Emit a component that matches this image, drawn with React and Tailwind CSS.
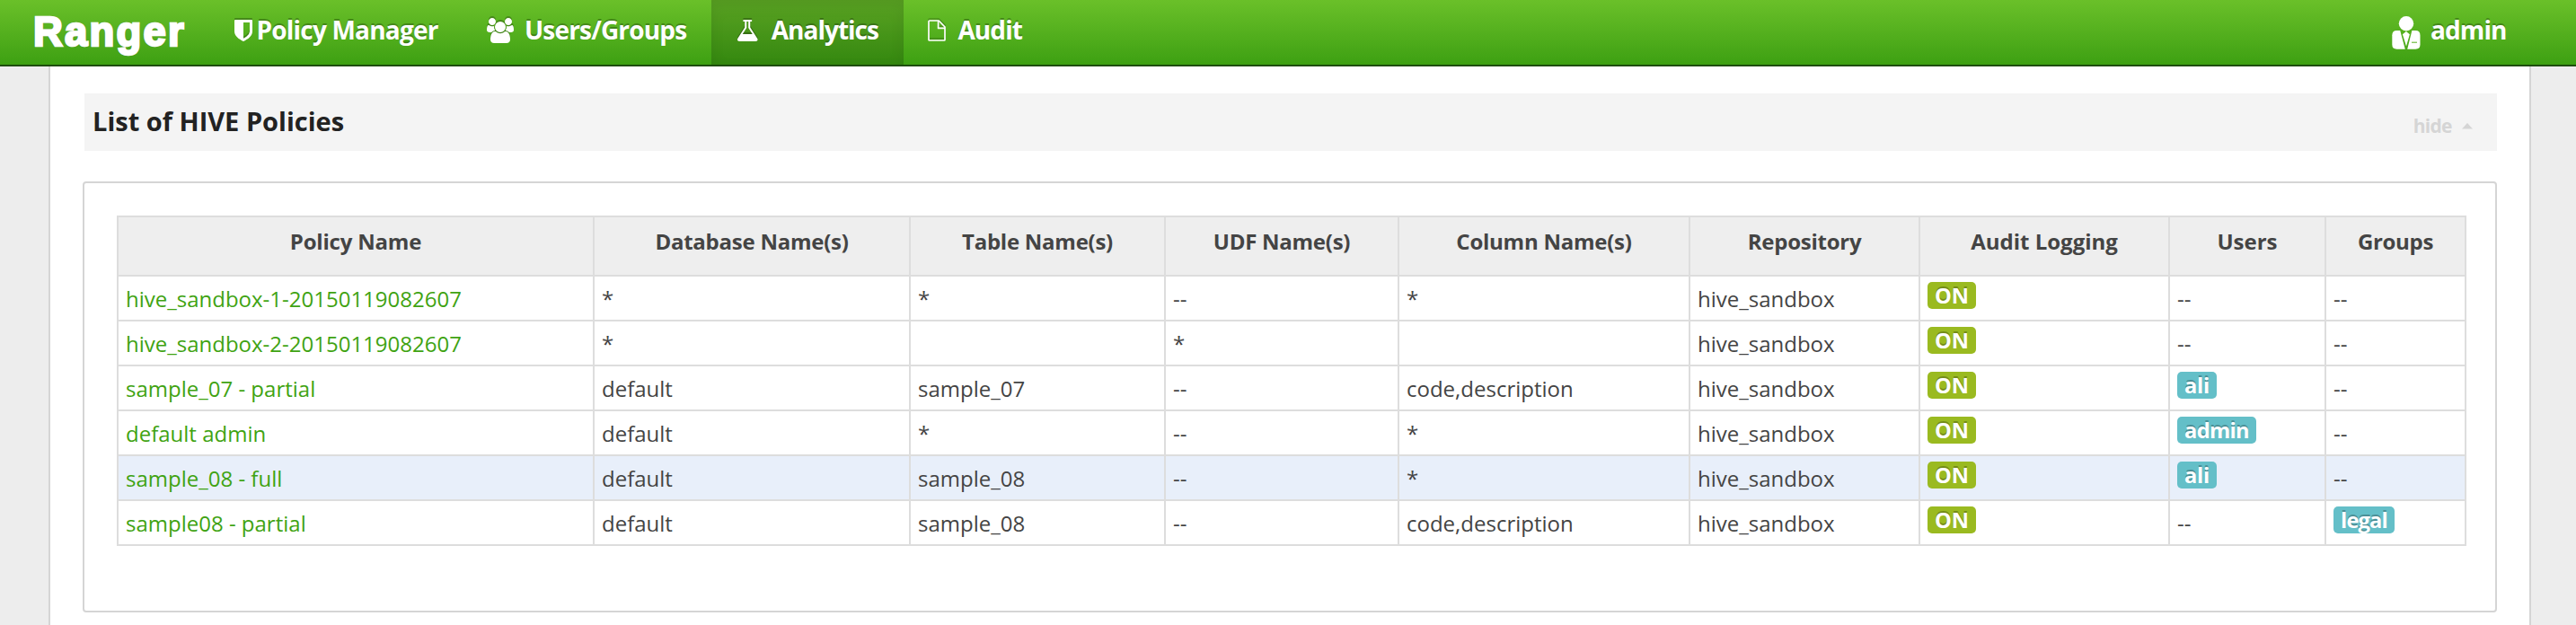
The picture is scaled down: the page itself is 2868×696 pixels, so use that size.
const columns = [
  { key: 'name', label: 'Policy Name', width: 'w-[530px] tracking-[-0.2px]' },
  { key: 'database', label: 'Database Name(s)', width: 'w-[352px] tracking-[-0.25px]' },
  { key: 'table', label: 'Table Name(s)', width: 'w-[284px] tracking-[-0.25px]' },
  { key: 'udf', label: 'UDF Name(s)', width: 'w-[260px] tracking-[-0.25px]' },
  { key: 'column', label: 'Column Name(s)', width: 'w-[324px] tracking-[-0.25px]' },
  { key: 'repository', label: 'Repository', width: 'w-[256px] tracking-[-0.25px]' },
  { key: 'audit', label: 'Audit Logging', width: 'w-[278px]' },
  { key: 'users', label: 'Users', width: 'w-[174px]' },
  { key: 'groups', label: 'Groups', width: 'w-[156px] tracking-[-0.3px]' },
];

const policies = [
  { name: 'hive_sandbox-1-20150119082607', database: '*', table: '*', udf: '--', column: '*', users: '--', groups: '--' },
  { name: 'hive_sandbox-2-20150119082607', database: '*', table: '', udf: '*', column: '', users: '--', groups: '--' },
  { name: 'sample_07 - partial', database: 'default', table: 'sample_07', udf: '--', column: 'code,description', users: 'ali', groups: '--' },
  { name: 'default admin', database: 'default', table: '*', udf: '--', column: '*', users: 'admin', groups: '--' },
  { name: 'sample_08 - full', database: 'default', table: 'sample_08', udf: '--', column: '*', users: 'ali', groups: '--', hovered: true },
  { name: 'sample08 - partial', database: 'default', table: 'sample_08', udf: '--', column: 'code,description', users: '--', groups: 'legal' },
];

const labelTracking = {
  ali: 'tracking-[-0.27px]',
  admin: 'tracking-[-0.66px]',
  legal: 'tracking-[-0.82px]',
  ON: '',
};

const iconShadow = 'fill-white [filter:drop-shadow(0_-2px_0_rgba(0,0,0,0.25))]';

function ShieldIcon() {
  return (
    <svg viewBox="0 0 1280 1536" className={`mt-[22px] h-6 w-5 shrink-0 ${iconShadow}`}>
      <path d="M1088 832V192H640v1137q119-63 213-137 235-184 235-360zM1280 64v768q0 86-33.5 170.5t-83 150-118 127.5-126.5 103-121 77.5-89.5 49.5-42.5 20q-12 6-26 6t-26-6q-16-7-42.5-20t-89.5-49.5-121-77.5-126.5-103-118-127.5-83-150T0 832V64q0-26 19-45T64 0h1152q26 0 45 19t19 45z" />
    </svg>
  );
}

function GroupIcon() {
  return (
    <svg viewBox="0 0 1920 1792" className={`mt-5 h-7 w-[30px] shrink-0 ${iconShadow}`}>
      <path d="M593 896q-162 5-265 128H194q-82 0-138-40.5T0 865q0-353 124-353 6 0 43.5 21t97.5 42.5T384 597q67 0 133-23-5 37-5 66 0 139 81 256zM1664 1533q0 120-73 189.5t-194 69.5H523q-121 0-194-69.5T256 1533q0-53 3.5-103.5t14-109T300 1212t43-97.5 62-81 85.5-53.5T602 960q10 0 43 21.5t73 48 107 48 135 21.5 135-21.5 107-48 73-48 43-21.5q61 0 111.5 20t85.5 53.5 62 81 43 97.5 26.5 108.5 14 109 3.5 103.5zM640 256q0 106-75 181t-181 75-181-75-75-181 75-181T384 0t181 75 75 181zM1344 640q0 159-112.5 271.5T960 1024 688.5 911.5 576 640t112.5-271.5T960 256t271.5 112.5T1344 640zM1920 865q0 78-56 118.5t-138 40.5h-134q-103-123-265-128 81-117 81-256 0-29-5-66 66 23 133 23 59 0 119-21.5t97.5-42.5 43.5-21q124 0 124 353zM1792 256q0 106-75 181t-181 75-181-75-75-181 75-181T1536 0t181 75 75 181z" />
    </svg>
  );
}

function FlaskIcon() {
  return (
    <svg viewBox="110 128 1444 1536" className={`mt-[22px] h-6 w-[22.5px] shrink-0 ${iconShadow}`}>
      <path d="M1520 1448q56 89 21.5 152.5T1401 1664H263q-106 0-140.5-63.5T144 1448l496-782V256h-64q-26 0-45-19t-19-45 19-45 45-19h512q26 0 45 19t19 45-19 45-45 19h-64v410zM749 734l-272 418h710L915 734l-21-32V256H768v446z" />
    </svg>
  );
}

function FileIcon() {
  return (
    <svg viewBox="0 0 20 24" className="mt-[22px] h-6 w-5 shrink-0 fill-none stroke-white stroke-[1.7] [filter:drop-shadow(0_-2px_0_rgba(0,0,0,0.2))]" strokeLinejoin="round">
      <path d="M1 1.8Q1 1 1.8 1H12.2L19 8V22.2Q19 23 18.2 23H1.8Q1 23 1 22.2Z" />
      <path d="M11.6 1V9.4H19" />
    </svg>
  );
}

function AdminIcon() {
  return (
    <svg viewBox="0 0 32 37" className="mt-[18px] h-[37px] w-8 shrink-0 fill-white">
      <circle cx="16" cy="8.2" r="8.2" />
      <path d="M5.5 16H9.2L14.8 36.7H5.5Q.3 36.7 .3 31.5V21.2Q.3 16 5.5 16Z" />
      <path d="M22.4 16H26.3Q31.5 16 31.5 21.2V31.5Q31.5 36.7 26.3 36.7H17.2Z" />
      <path d="M15.9 17L19.9 20.2 16 33.5 11.9 20.2Z" />
      <path d="M22 29.2H28" className="stroke-[#54b01c] stroke-1" />
    </svg>
  );
}

function NavItem({ icon, label, className }) {
  return (
    <a className={`flex h-[72px] items-start ${className}`}>
      {icon}
      <span className="mt-[13px] text-[28px] leading-10 font-bold whitespace-nowrap text-white [text-shadow:0_-2px_0_rgba(0,0,0,0.25)]">{label}</span>
    </a>
  );
}

function Label({ text, color }) {
  return (
    <span className={`mt-1.5 block h-[30px] w-fit rounded-[5px] px-2 text-[23.688px] leading-[30px] font-bold text-white [text-shadow:0_-2px_0_rgba(0,0,0,0.25)] ${color} ${labelTracking[text]}`}>
      {text}
    </span>
  );
}

function Plain({ text, color = 'text-[#444444]' }) {
  return <span className={`block pt-[5px] text-2xl leading-10 whitespace-nowrap ${color}`}>{text}</span>;
}

function Cell({ column, policy }) {
  if (column === 'audit') return <Label text="ON" color="bg-[#9aba20]" />;
  if (column === 'name') return <Plain text={policy.name} color="text-[#3fa312]" />;
  if (column === 'repository') return <Plain text="hive_sandbox" />;
  const value = policy[column];
  if ((column === 'users' || column === 'groups') && value !== '--') return <Label text={value} color="bg-[#64bfc8]" />;
  return <Plain text={value} />;
}

export default function App() {
  return (
    <div className="flex h-[696px] w-[2868px] flex-col overflow-hidden bg-[#ededed] font-['Open_Sans',sans-serif]">
      <header className="flex h-[74px] shrink-0 items-start border-b-2 border-[#1e4d0c] bg-linear-to-b from-[#6ac029] to-[#3da012]">
        <div className="w-[233px] shrink-0 pt-[9.5px] pl-[37px] font-['Liberation_Sans',sans-serif] text-[45.5px] leading-[52px] font-bold tracking-[2.2px] whitespace-nowrap text-white [-webkit-text-stroke:2.4px_white] [text-shadow:0_1px_1px_#777,0_-1px_1px_#777,1px_0_1px_#777,-1px_0_1px_#777]">
          Ranger
        </div>
        <nav className="flex flex-1">
          <NavItem icon={<ShieldIcon />} label="Policy Manager" className="w-[281px] gap-[4.5px] pl-7 tracking-[-0.8px]" />
          <NavItem icon={<GroupIcon />} label="Users/Groups" className="w-[278px] gap-3 pl-7 tracking-[-0.82px]" />
          <NavItem icon={<FlaskIcon />} label="Analytics" className="w-[214px] gap-[15.3px] bg-black/15 pl-[29px] tracking-[-1px] shadow-[inset_0_6px_16px_rgba(0,0,0,0.08)]" />
          <NavItem icon={<FileIcon />} label="Audit" className="gap-[13.4px] pl-[27px] tracking-[-0.9px]" />
        </nav>
        <NavItem icon={<AdminIcon />} label="admin" className="w-[205px] gap-[11px] tracking-[-0.9px]" />
      </header>

      <main className="mr-[50px] ml-[54px] flex-1 border-x-2 border-[#d5d5d5] bg-white pt-[30px]">
        <div className="mr-9 ml-[38px] flex h-16 items-start justify-between bg-[#f4f4f4] pr-[27px] pl-[9px]">
          <h3 className="pt-[11px] text-[29px] leading-10 font-bold text-[#222222]">List of HIVE Policies</h3>
          <a className="flex items-start pt-[21px] text-[21px] leading-[30px] font-bold tracking-[-0.8px] text-[#d5d5d5]">
            hide
            <svg viewBox="0 0 12 7" className="mt-3 ml-[11.5px] h-[7px] w-3 fill-[#d5d5d5]">
              <path d="M6 0L12 6.4H0Z" />
            </svg>
          </a>
        </div>

        <section className="mt-[34px] mr-9 ml-9 h-[480px] rounded-[4px] border-2 border-[#d5d5d5] p-9">
          <table className="w-[2616px] table-fixed border-separate border-spacing-0 border-t-2 border-l-2 border-[#dddddd]">
            <thead>
              <tr className="h-[66px]">
                {columns.map((c) => (
                  <th key={c.key} className={`border-r-2 border-b-2 border-[#dddddd] bg-[#eeeeee] p-0 align-top text-2xl font-bold text-[#444444] ${c.width}`}>
                    <div className="h-16 pt-[7px] leading-10">{c.label}</div>
                  </th>
                ))}
              </tr>
            </thead>
            <tbody>
              {policies.map((p) => (
                <tr key={p.name} className={p.hovered ? 'bg-[#e8effa]' : 'bg-white'}>
                  {columns.map((c) => (
                    <td key={c.key} className="border-r-2 border-b-2 border-[#dddddd] py-0 pr-0 pl-2 align-top">
                      <div className="flow-root h-12">
                        <Cell column={c.key} policy={p} />
                      </div>
                    </td>
                  ))}
                </tr>
              ))}
            </tbody>
          </table>
        </section>
      </main>
    </div>
  );
}
